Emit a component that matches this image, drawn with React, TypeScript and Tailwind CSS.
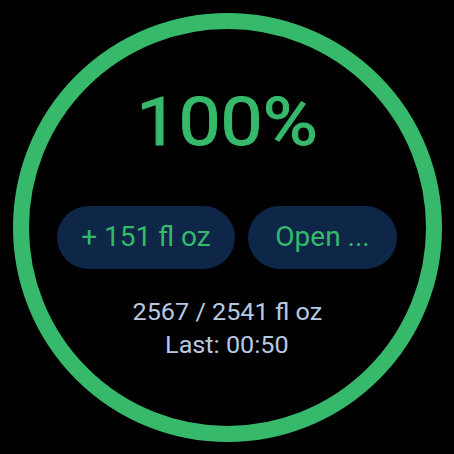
export default function App() {
  return (
    <div className="w-[454px] h-[454px] bg-black flex items-center justify-center" style={{ fontFamily: 'Roboto, "Noto Sans", sans-serif' }}>
      <div className="w-[429px] h-[429px] shrink-0 rounded-full border-[16px] border-[#36b96b] flex flex-col items-center pt-[60px]">
        {/* progress */}
        <div className="text-[67px] leading-none text-[#36b96b] scale-x-[1.12] [-webkit-text-stroke:1px_#36b96b]">100%</div>

        {/* actions */}
        <div className="flex gap-[13px] mt-[50px]">
          <button className="w-[178px] h-[63px] rounded-full bg-[#0e2647] text-[#36b96b] text-[28px] leading-none flex items-center justify-center">
            + 151 fl oz
          </button>
          <button className="w-[149px] h-[63px] rounded-full bg-[#0e2647] text-[#36b96b] text-[28px] leading-none flex items-center justify-center">
            Open ...
          </button>
        </div>

        {/* stats */}
        <div className="mt-[31px] flex flex-col items-center gap-[9px] text-[24px] leading-none text-[#b7c9e1]">
          <div className="scale-x-[1.05]">2567 / 2541 fl oz</div>
          <div className="scale-x-[1.05]">Last: 00:50</div>
        </div>
      </div>
    </div>
  );
}
